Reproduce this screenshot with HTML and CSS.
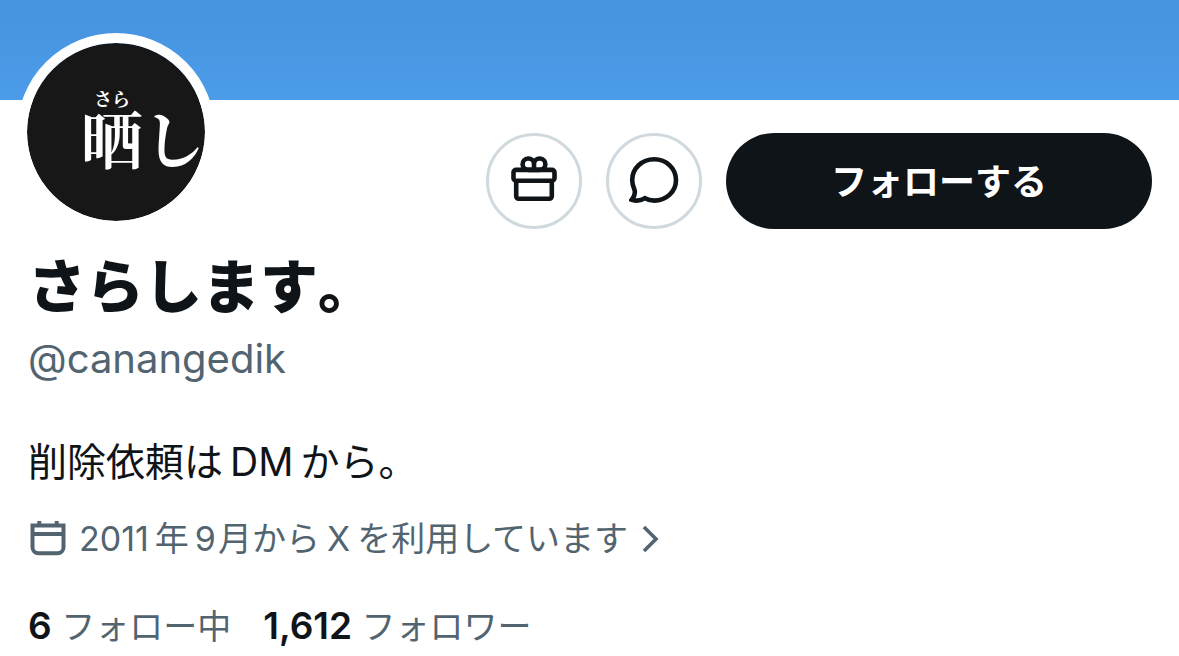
FILE: index.html
```html
<!DOCTYPE html>
<html lang="ja">
<head>
    <meta charset="UTF-8">
    <meta name="viewport" content="width=device-width, initial-scale=1.0">
    <title>さらします。 (@canangedik)</title>
    <link rel="stylesheet" href="styles.css">
</head>
<body>
    <div class="banner"></div>

    <main class="profile">
        <div class="profile-top">
            <div class="avatar">
                <span class="avatar-text"><ruby>晒<rt>さら</rt></ruby>し</span>
            </div>

            <div class="actions">
                <button type="button" class="icon-button" aria-label="ギフト">
                    <svg width="50" height="50" viewBox="0 0 50 50" fill="none" stroke="currentColor" stroke-width="4.6">
                        <rect x="4.5" y="13.9" width="41" height="10.8" rx="2.5"/>
                        <path d="M7.2 24.7v15.6a2.5 2.5 0 0 0 2.5 2.5h30.6a2.5 2.5 0 0 0 2.5-2.5V24.7"/>
                        <path d="M25 13.9h-5.500a5.700 5.700 0 1 1 5.500-5.900zM25 13.900h5.500a5.700 5.700 0 1 0-5.500-5.900z"/>
                    </svg>
                </button>
                <button type="button" class="icon-button" aria-label="メッセージ">
                    <svg width="50" height="50" viewBox="0 0 50 50" fill="none" stroke="currentColor" stroke-width="4.6">
                        <path d="M25.2 3.3C13 3.3 3.2 12.4 3.2 24c0 3.4.9 6.2 2 8.8 1.4 3.6.4 7.6-2.4 11 4.6 1.4 9.4.9 13.2-1.6 2.8 1.6 5.8 2.4 9.2 2.4C37.4 44.6 47 35.6 47 24S37.4 3.3 25.2 3.3z"/>
                    </svg>
                </button>
                <button type="button" class="follow-button">フォローする</button>
            </div>
        </div>

        <h1 class="name">さらします。</h1>
        <p class="handle">@canangedik</p>
        <p class="bio">削除依頼は<span class="latin">DM</span>から。</p>

        <a href="#" class="joined">
            <svg class="calendar" width="36" height="36" viewBox="0 0 36 36" fill="none" stroke="currentColor" stroke-width="4">
                <path d="M2.5 4.5h31v21.8a6 6 0 0 1-6 6h-19a6 6 0 0 1-6-6zM2.5 13h31M9.3 0v4.5M26.7 0v4.5"/>
            </svg>
            <span><span class="year">2011</span>年<span class="month">9</span>月から<span class="latin">X</span>を利用しています</span>
            <svg class="chevron" width="18" height="30" viewBox="0 0 18 30" fill="none" stroke="currentColor" stroke-width="3.6">
                <path d="M3 3l12 12L3 27"/>
            </svg>
        </a>

        <div class="stats">
            <a href="#"><strong>6</strong> フォロー中</a>
            <a href="#"><strong>1,612</strong> フォロワー</a>
        </div>
    </main>
</body>
</html>
```

FILE: styles.css
```css
body {
    margin: 0;
    min-height: 100vh;
    font-family: Inter, 'Noto Sans CJK JP', sans-serif;
    background: white;
    color: #0f1419;
}
a {
    color: inherit;
    text-decoration: none;
}
.banner {
    height: 100px;
    background: linear-gradient(#4693df, #4b9ce9);
}
.profile {
    padding: 0 27px 0 28px;
}
.profile-top {
    display: flex;
    justify-content: space-between;
    align-items: flex-start;
}
.avatar {
    box-sizing: border-box;
    display: flex;
    align-items: center;
    justify-content: flex-end;
    width: 198px;
    height: 198px;
    margin: -67px 0 0 -11px;
    padding-bottom: 6px;
    border: 10px solid white;
    border-radius: 50%;
    background: #171717;
    background-clip: padding-box;
    overflow: hidden;
}
.avatar-text {
    color: white;
    font-family: 'Noto Serif CJK JP', 'Noto Sans CJK JP', serif;
    font-size: 62px;
    font-weight: 700;
    line-height: 60px;
    white-space: nowrap;
}
.avatar-text ruby {
    ruby-align: center;
}
.avatar-text rt {
    font-size: 18px;
    line-height: 18px;
}
.actions {
    display: flex;
    gap: 24px;
    padding-top: 33px;
}
.icon-button {
    display: flex;
    align-items: center;
    justify-content: center;
    width: 96px;
    height: 96px;
    padding: 0;
    border: 3px solid #cfd9de;
    border-radius: 50%;
    background: white;
    color: #0f1419;
}
.follow-button {
    width: 426px;
    height: 96px;
    padding: 0 0 4px;
    border: none;
    border-radius: 48px;
    background: #0f1419;
    color: white;
    font-family: inherit;
    font-size: 36px;
    font-weight: 700;
}
.name {
    margin: 18px 0 0;
    font-size: 58px;
    font-weight: 800;
    font-kerning: none;
    text-spacing-trim: space-all;
    line-height: 76px;
}
.handle {
    margin: 8px 0 0;
    color: #536471;
    font-size: 40px;
    line-height: 52px;
}
.bio {
    margin: 49px 0 0;
    font-size: 39px;
    line-height: 56px;
}
.latin {
    margin: 0 7px;
}
.joined {
    display: flex;
    align-items: center;
    margin-top: 25px;
    color: #536471;
    font-size: 34px;
    line-height: 48px;
}
.calendar {
    margin: 0 13px 0 2px;
}
.year {
    margin-right: 6px;
}
.month {
    margin: 0 2px 0 6px;
}
.chevron {
    margin-left: 13px;
}
.stats {
    display: flex;
    gap: 32px;
    margin-top: 39px;
    color: #536471;
    font-size: 34px;
    line-height: 48px;
}
.stats strong {
    color: #0f1419;
    font-size: 37px;
    font-weight: 600;
}
```
